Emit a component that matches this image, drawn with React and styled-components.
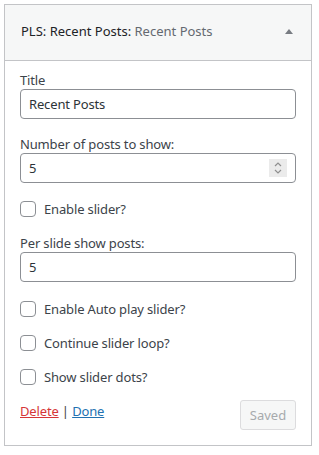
import styled, { createGlobalStyle } from "styled-components";

const GlobalStyle = createGlobalStyle`
  body {
    margin: 0;
    background: #fff;
    font-family: "Noto Sans", "Open Sans", sans-serif;
    font-size: 13px;
    color: #3c434a;
  }
`;

const Page = styled.div`
  padding: 4px;
`;

const Widget = styled.div`
  width: 308px;
  box-sizing: border-box;
  border: 1px solid #c3c4c7;
  background: #fff;
`;

const WidgetTop = styled.div`
  display: flex;
  align-items: center;
  justify-content: space-between;
  height: 56px;
  box-sizing: border-box;
  padding: 0 18px 3px 16px;
  background: #f6f7f7;
  border-bottom: 1px solid #c3c4c7;
`;

const WidgetTitle = styled.h3`
  margin: 0;
  font-size: 13px;
  font-weight: 400;
  line-height: 18px;
  color: #1d2327;
`;

const InWidgetTitle = styled.span`
  color: #646970;
`;

const Toggle = styled.span`
  width: 0;
  height: 0;
  border-left: 4px solid transparent;
  border-right: 4px solid transparent;
  border-bottom: 5px solid #787c82;
`;

const WidgetInside = styled.div`
  padding: 10px 15px 15px;
  letter-spacing: -0.15px;
`;

const Field = styled.div`
  margin-bottom: ${({ $mb }) => ($mb ?? 16)}px;
`;

const Label = styled.label`
  display: block;
  line-height: 18px;
  color: #3c434a;
`;

const TextInput = styled.input`
  display: block;
  width: 100%;
  height: 30px;
  box-sizing: border-box;
  padding: 0 8px;
  border: 1px solid #8c8f94;
  border-radius: 4px;
  font: inherit;
  letter-spacing: inherit;
  color: #2c3338;
  background: #fff;
`;

const NumberBox = styled.div`
  display: flex;
  align-items: center;
  height: 30px;
  box-sizing: border-box;
  padding: 0 8px;
  border: 1px solid #8c8f94;
  border-radius: 4px;
  background: #fff;
`;

const BareInput = styled.input`
  flex: 1;
  min-width: 0;
  border: none;
  outline: none;
  padding: 0;
  font: inherit;
  color: #2c3338;
  background: transparent;
`;

const Spinner = styled.span`
  display: flex;
  align-items: center;
  justify-content: center;
  width: 18px;
  height: 18px;
  background: #ebebeb;
`;

const CheckRow = styled.label`
  display: flex;
  align-items: center;
  height: 18px;
  color: #3c434a;
`;

const CheckBox = styled.input`
  appearance: none;
  width: 16px;
  height: 16px;
  margin: 0 8px 0 0;
  border: 1px solid #8c8f94;
  border-radius: 4px;
  background: #fff;
  box-sizing: border-box;
`;

const Footer = styled.div`
  display: flex;
  justify-content: space-between;
  align-items: flex-start;
`;

const Links = styled.div`
  margin-top: 2px;
  line-height: 18px;
  color: #3c434a;
`;

const ActionLink = styled.a`
  color: ${({ $danger }) => ($danger ? "#d63638" : "#2271b1")};
  text-decoration: underline;
`;

const SavedButton = styled.button`
  width: 56px;
  height: 30px;
  padding: 0;
  border: 1px solid #dcdcde;
  border-radius: 3px;
  background: #f6f7f7;
  color: #a7aaad;
  font: inherit;
`;

function SpinIcon() {
  return (
    <Spinner>
      <svg width="10" height="14" viewBox="0 0 10 14" fill="none" stroke="#8f8f8f" strokeWidth="1.2">
        <path d="M2 5 L5 2 L8 5" />
        <path d="M2 9 L5 12 L8 9" />
      </svg>
    </Spinner>
  );
}

function Check({ label, mb }) {
  return (
    <Field $mb={mb}>
      <CheckRow>
        <CheckBox type="checkbox" />
        {label}
      </CheckRow>
    </Field>
  );
}

export default function App() {
  return (
    <Page>
      <GlobalStyle />
      <Widget>
        <WidgetTop>
          <WidgetTitle>
            PLS: Recent Posts: <InWidgetTitle>Recent Posts</InWidgetTitle>
          </WidgetTitle>
          <Toggle />
        </WidgetTop>
        <WidgetInside>
          <Field>
            <Label>Title</Label>
            <TextInput type="text" defaultValue="Recent Posts" />
          </Field>
          <Field $mb={17}>
            <Label>Number of posts to show:</Label>
            <NumberBox>
              <BareInput type="text" defaultValue="5" />
              <SpinIcon />
            </NumberBox>
          </Field>
          <Check label="Enable slider?" />
          <Field $mb={18}>
            <Label>Per slide show posts:</Label>
            <TextInput type="text" defaultValue="5" />
          </Field>
          <Check label="Enable Auto play slider?" />
          <Check label="Continue slider loop?" />
          <Check label="Show slider dots?" mb={14} />
          <Footer>
            <Links>
              <ActionLink $danger href="#">Delete</ActionLink> | <ActionLink href="#">Done</ActionLink>
            </Links>
            <SavedButton type="button">Saved</SavedButton>
          </Footer>
        </WidgetInside>
      </Widget>
    </Page>
  );
}
